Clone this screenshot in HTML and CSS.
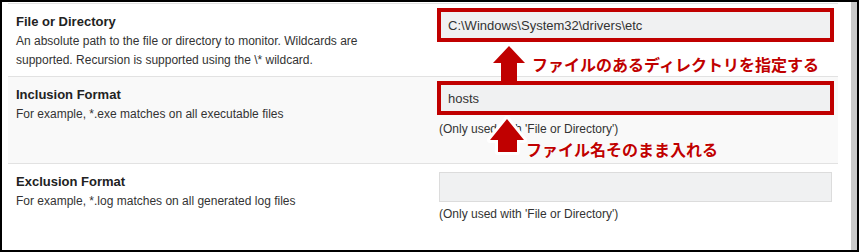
FILE: index.html
```html
<!DOCTYPE html>
<html lang="en">
<head>
    <meta charset="UTF-8">
    <meta name="viewport" content="width=device-width, initial-scale=1.0">
    <title>Monitor Settings</title>
    <link rel="stylesheet" href="styles.css">
</head>
<body>
    <div class="frame">
        <div class="panel">
            <div class="row">
                <div class="info">
                    <div class="label">File or Directory</div>
                    <div class="desc">An absolute path to the file or directory to monitor. Wildcards are supported. Recursion is supported using the \* wildcard.</div>
                </div>
                <div class="field">
                    <input type="text" class="marked" value="C:\Windows\System32\drivers\etc">
                </div>
            </div>
            <div class="row tall shaded">
                <div class="info">
                    <div class="label">Inclusion Format</div>
                    <div class="desc">For example, *.exe matches on all executable files</div>
                </div>
                <div class="field">
                    <input type="text" class="marked" value="hosts">
                    <div class="note low">(Only used with 'File or Directory')</div>
                </div>
            </div>
            <div class="row tall">
                <div class="info">
                    <div class="label">Exclusion Format</div>
                    <div class="desc">For example, *.log matches on all generated log files</div>
                </div>
                <div class="field">
                    <input type="text" class="plain" value="">
                    <div class="note">(Only used with 'File or Directory')</div>
                </div>
            </div>
        </div>
        <div class="scrollbar"></div>

        <!-- annotations -->
        <svg class="arrow arrow-one" width="36" height="38" viewBox="0 0 36 38">
            <polygon points="18,2 34,19 26,19 26,37 10,37 10,19 2,19"/>
        </svg>
        <span class="callout callout-one">ファイルのあるディレクトリを指定する</span>

        <svg class="arrow arrow-two" width="46" height="44" viewBox="0 0 46 44">
            <polygon points="23,5 40,26 33,26 33,38 14,38 14,26 6,26"/>
        </svg>
        <span class="callout callout-two">ファイル名そのまま入れる</span>
    </div>
</body>
</html>
```

FILE: styles.css
```css
body {
    margin: 0;
    font-family: "Liberation Sans", Arial, sans-serif;
    color: #333;
}
.frame {
    position: relative;
    display: flex;
    width: 859px;
    height: 252px;
    box-sizing: border-box;
    border: 2px solid #000;
    background: #fff;
    overflow: hidden;
}
.panel {
    flex: 1;
    padding: 1px 13px 0 6px;
}
.scrollbar {
    width: 6px;
    background: #c9c9c9;
}
.row {
    display: grid;
    grid-template-columns: 423px 393px;
    height: 73px;
    box-sizing: border-box;
    padding: 6px 0 0 8px;
    border-top: 1px solid #e2e2e2;
}
.row.tall {
    height: 87px;
}
.row.shaded {
    background: #f9f9f9;
}
.info {
    padding-top: 2px;
}
.label {
    font-size: 13px;
    font-weight: bold;
    line-height: 20px;
    color: #222;
}
.desc {
    width: 372px;
    font-size: 12px;
    line-height: 19px;
}
input {
    display: block;
    width: 393px;
    height: 30px;
    box-sizing: border-box;
    padding: 0 8px;
    border: 1px solid #dcdcdc;
    background: #f0f1f2;
    font-family: "Liberation Sans", Arial, sans-serif;
    font-size: 13px;
    color: #333;
}
input.marked {
    outline: 4px solid #c00000;
    outline-offset: -2px;
}
input.plain {
    margin-top: 2px;
}
.note {
    margin-top: 3px;
    font-size: 12px;
    line-height: 19px;
}
.note.low {
    margin-top: 7px;
}

/* red arrows and callouts drawn over the form */
.arrow {
    position: absolute;
    fill: #c00000;
}
.arrow-one {
    left: 489px;
    top: 42px;
}
.arrow-two {
    left: 482px;
    top: 112px;
}
.arrow-two polygon {
    stroke: #fff;
    stroke-width: 6px;
    stroke-linejoin: round;
    paint-order: stroke;
}
.callout {
    position: absolute;
    font-family: "Noto Sans CJK JP", sans-serif;
    font-size: 16px;
    font-weight: bold;
    line-height: 20px;
    color: #c00000;
    white-space: nowrap;
    text-shadow: 0 0 2px #fff, 0 0 2px #fff;
}
.callout-one {
    left: 530px;
    top: 52px;
}
.callout-two {
    left: 524px;
    top: 137px;
}
```
